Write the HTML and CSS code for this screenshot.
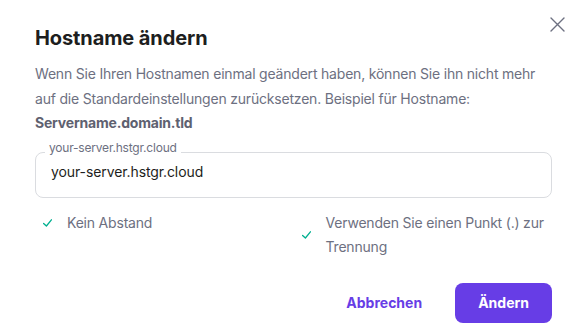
FILE: index.html
```html
<!DOCTYPE html>
<html lang="de">
<head>
<meta charset="utf-8">
<title>Hostname ändern</title>
<link rel="stylesheet" href="styles.css">
</head>
<body>
<div class="dialog">
  <button class="close" aria-label="Schließen">
    <svg width="15" height="15" viewBox="0 0 15 15"><path d="M1 1L14 14M14 1L1 14" stroke="#6d7081" stroke-width="1.4" stroke-linecap="round"/></svg>
  </button>
  <h2 class="title">Hostname ändern</h2>
  <p class="desc">Wenn Sie Ihren Hostnamen einmal geändert haben, können Sie ihn nicht mehr auf die Standardeinstellungen zurücksetzen. Beispiel für Hostname:<br><strong>Servername.domain.tld</strong></p>
  <div class="field">
    <span class="field-label">your-server.hstgr.cloud</span>
    <div class="field-value">your-server.hstgr.cloud</div>
  </div>
  <ul class="rules">
    <li class="rule">
      <svg class="check" width="9" height="8" viewBox="0 0 9 8"><path d="M0.6 4.4L3.4 7L8.4 0.8" fill="none" stroke="#00b090" stroke-width="1.3" stroke-linecap="round" stroke-linejoin="round"/></svg>
      <span>Kein Abstand</span>
    </li>
    <li class="rule">
      <svg class="check" width="9" height="8" viewBox="0 0 9 8"><path d="M0.6 4.4L3.4 7L8.4 0.8" fill="none" stroke="#00b090" stroke-width="1.3" stroke-linecap="round" stroke-linejoin="round"/></svg>
      <span>Verwenden Sie einen Punkt (.) zur Trennung</span>
    </li>
  </ul>
  <div class="actions">
    <button class="btn btn-text">Abbrechen</button>
    <button class="btn btn-primary">Ändern</button>
  </div>
</div>
</body>
</html>
```
FILE: styles.css
```css
html, body {
  margin: 0;
  padding: 0;
  background: #ffffff;
}
body {
  font-family: Inter, "DejaVu Sans", sans-serif;
  color: #1d1e20;
}
.dialog {
  position: relative;
  width: 586px;
  height: 335px;
  box-sizing: border-box;
  padding: 26px 34px 0 35px;
}
.close {
  position: absolute;
  top: 17px;
  left: 550px;
  padding: 0;
  margin: 0;
  border: 0;
  background: none;
  width: 15px;
  height: 15px;
  display: block;
}
.close svg { display: block; }
.title {
  margin: 0;
  font-size: 20px;
  line-height: 24px;
  font-weight: 700;
  color: #1d1e20;
  letter-spacing: -0.1px;
}
.desc {
  margin: 12px 0 0;
  font-size: 14px;
  line-height: 24.5px;
  color: #6d7081;
  letter-spacing: -0.2px;
}
.desc strong {
  font-weight: 700;
  color: #5e6170;
}
.field {
  position: relative;
  margin-top: 16px;
  height: 46px;
  box-sizing: border-box;
  border: 1px solid #dadce0;
  border-radius: 8px;
}
.field-label {
  position: absolute;
  top: -12px;
  left: 9px;
  padding: 0 4px;
  background: #ffffff;
  font-size: 12px;
  line-height: 14px;
  color: #6d7081;
  letter-spacing: -0.2px;
}
.field-value {
  padding-left: 15px;
  font-size: 14px;
  line-height: 38px;
  color: #1d1e20;
  letter-spacing: -0.1px;
}
.rules {
  list-style: none;
  margin: 13px 0 0;
  padding: 0;
  display: grid;
  grid-template-columns: 1fr 1fr;
  align-items: start;
}
.rule {
  display: flex;
  align-items: center;
  padding-left: 8px;
  font-size: 14px;
  line-height: 24px;
  color: #6d7081;
  letter-spacing: -0.2px;
}
.check {
  flex: none;
  margin-right: 15px;
  display: block;
}
.actions {
  display: flex;
  justify-content: flex-end;
  gap: 9px;
  margin-top: 24px;
}
.btn {
  font-family: inherit;
  font-size: 14px;
  font-weight: 700;
  height: 40px;
  padding: 0 24px;
  border: 0;
  border-radius: 8px;
  cursor: pointer;
}
.btn-text {
  background: none;
  color: #673de6;
}
.btn-primary {
  background: #673de6;
  color: #ffffff;
  padding: 0 23px;
}
```
